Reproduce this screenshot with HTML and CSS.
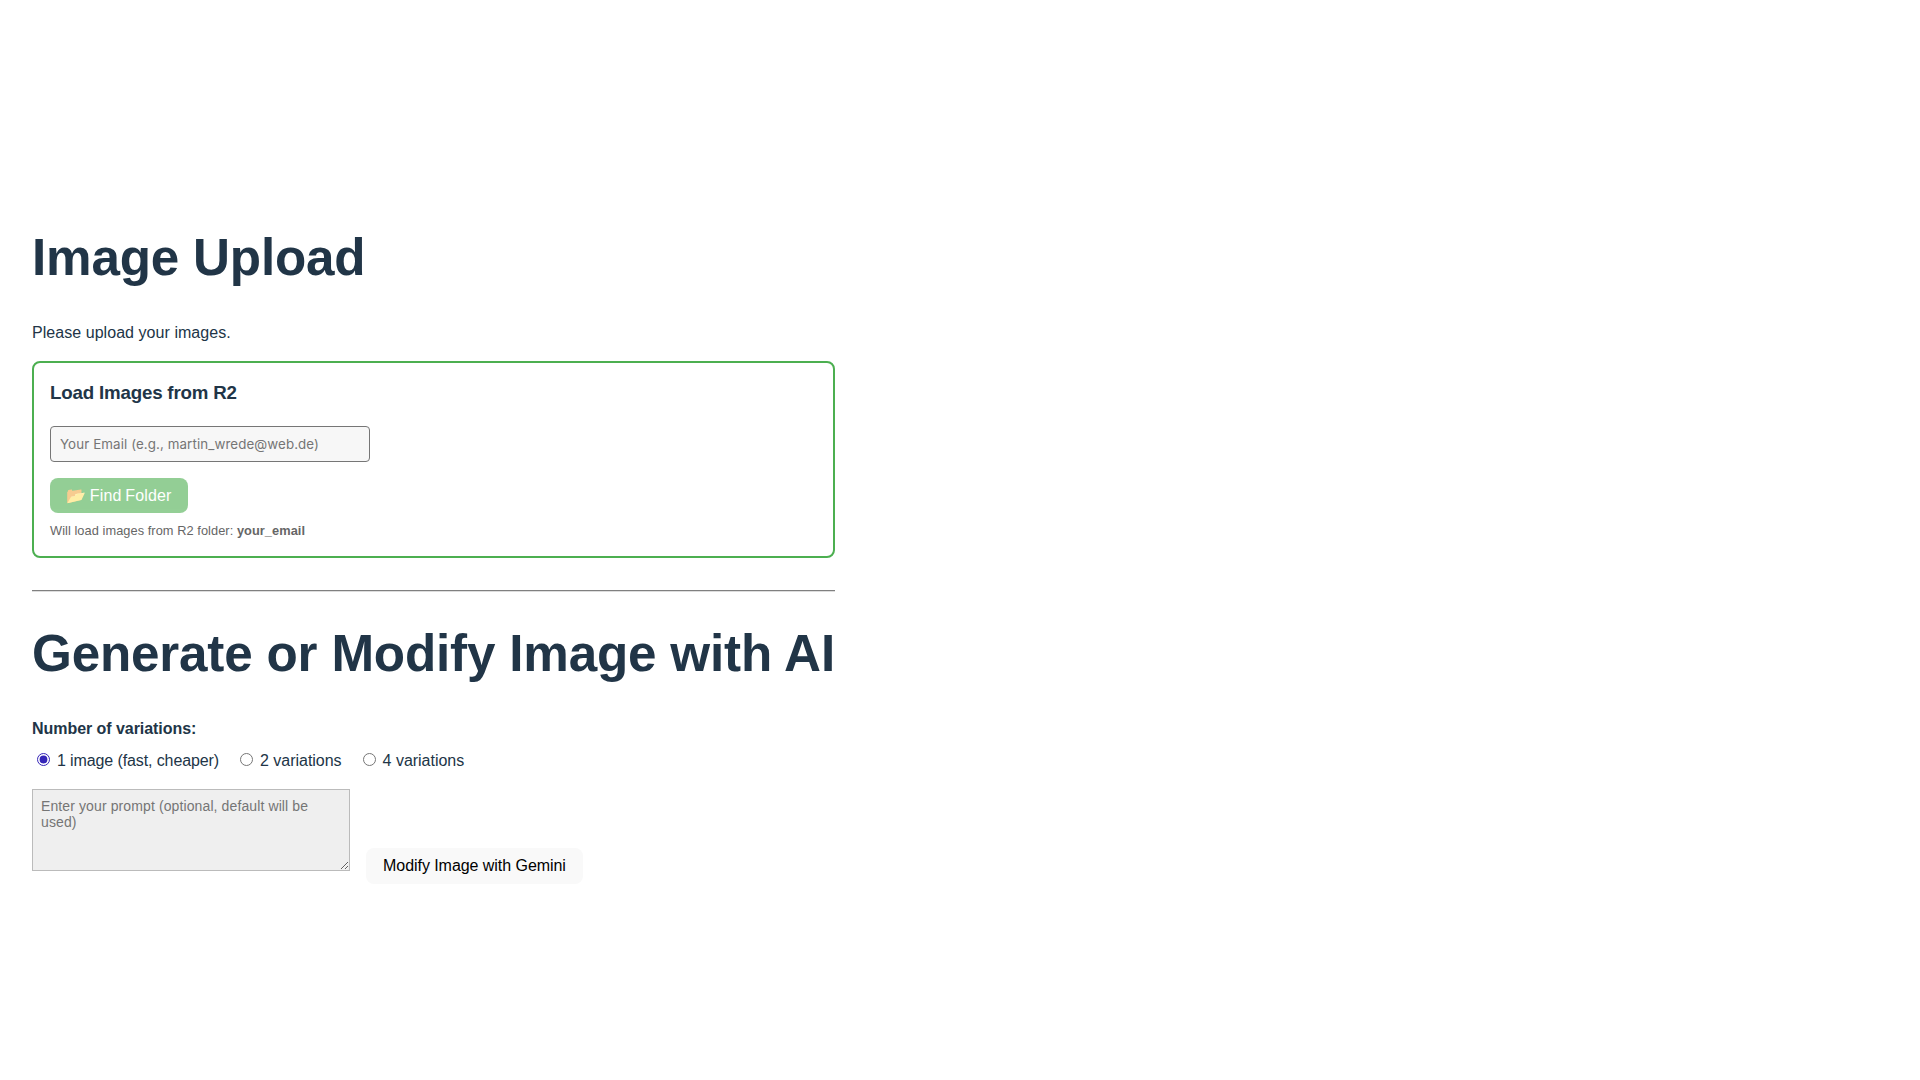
FILE: index.html
```html
<!DOCTYPE html>
<html lang="en">
<head>
<meta charset="utf-8">
<title>Image Upload</title>
<link rel="stylesheet" href="styles.css">
</head>
<body>
<main class="app">
  <h1 class="title">Image Upload</h1>
  <p class="intro">Please upload your images.</p>
  <section class="r2-box">
    <h3 class="r2-title">Load Images from R2</h3>
    <input class="email" type="text" placeholder="Your Email (e.g., martin_wrede@web.de)">
    <button class="find" type="button" disabled>📂 Find Folder</button>
    <p class="hint">Will load images from R2 folder: <strong>your_email</strong></p>
  </section>
  <hr class="rule">
  <h1 class="title">Generate or Modify Image with AI</h1>
  <div class="count-label">Number of variations:</div>
  <div class="radios">
    <label class="radio radio-long"><input type="radio" name="n" checked>1 image (fast, cheaper)</label>
    <label class="radio"><input type="radio" name="n">2 variations</label>
    <label class="radio"><input type="radio" name="n">4 variations</label>
  </div>
  <div class="prompt-row">
    <textarea class="prompt" rows="4" placeholder="Enter your prompt (optional, default will be used)"></textarea>
    <button class="modify" type="button">Modify Image with Gemini</button>
  </div>
</main>
</body>
</html>
```
FILE: styles.css
```css
html, body { margin: 0; padding: 0; }
body {
  background: #fff;
  color: #213547;
  font-family: "Liberation Sans", Arial, sans-serif;
  font-size: 16px;
  line-height: 24px;
}
.app { padding: 230px 32px 32px; width: max-content; }
.title {
  margin: 0;
  font-size: 51.2px;
  line-height: 56.32px;
  font-weight: 700;
  letter-spacing: -0.18px;
}
.intro { margin: 35px 0 16px; letter-spacing: 0.05px; }
.r2-box {
  border: 2px solid #4caf50;
  border-radius: 8px;
  padding: 16px 16px 15px;
  margin-bottom: 32px;
}
.r2-title { margin: 0 0 19px; font-size: 18.72px; line-height: 28px; font-weight: 700; letter-spacing: -0.18px; }
.email {
  display: block;
  box-sizing: border-box;
  width: 320px;
  height: 36px;
  padding: 0 9px;
  border: 1px solid #767676;
  border-radius: 4px;
  background: #f7f7f7;
  font-family: Inter, sans-serif;
  font-size: 13.33px;
  letter-spacing: 0.1px;
  color: #213547;
}
.email::placeholder { color: #757575; }
.find {
  display: block;
  margin-top: 16px;
  height: 35px;
  padding: 0 16px 0 16px;
  border: 0;
  border-radius: 8px;
  background: #4caf50;
  opacity: 0.6;
  color: #fff;
  font-family: "Liberation Sans", Arial, sans-serif;
  font-size: 16px;
  letter-spacing: 0.17px;
  word-spacing: -1px;
}
.hint { margin: 8px 0 0; font-size: 12.8px; line-height: 19.2px; color: #666; letter-spacing: 0.06px; }
.rule { margin: 32px 0 34px; border: 0; border-top: 1px solid #808080; border-bottom: 1px solid #ddd; }
.count-label { margin-top: 35px; font-weight: 700; letter-spacing: -0.05px; }
.radios { display: flex; gap: 16px; margin-top: 8px; }
.radio { display: flex; align-items: center; letter-spacing: -0.02px; }
.radio-long { letter-spacing: -0.11px; }
.radio input { margin: 2px 7px 4px 5px; accent-color: #3525b8; }
.prompt-row { display: flex; align-items: flex-end; gap: 16px; margin-top: 16px; }
.prompt {
  box-sizing: border-box;
  width: 318px;
  height: 82px;
  padding: 8px;
  border: 1px solid #bbb;
  background: #efefef;
  font-family: "Liberation Sans", Arial, sans-serif;
  font-size: 14px;
  letter-spacing: 0.11px;
  margin-bottom: 13px;
}
.modify {
  height: 36px;
  padding: 0 17px;
  border: 0;
  border-radius: 8px;
  background: #f9f9f9;
  color: #000;
  font-family: "Liberation Sans", Arial, sans-serif;
  font-size: 16px;
  letter-spacing: -0.05px;
}
```
